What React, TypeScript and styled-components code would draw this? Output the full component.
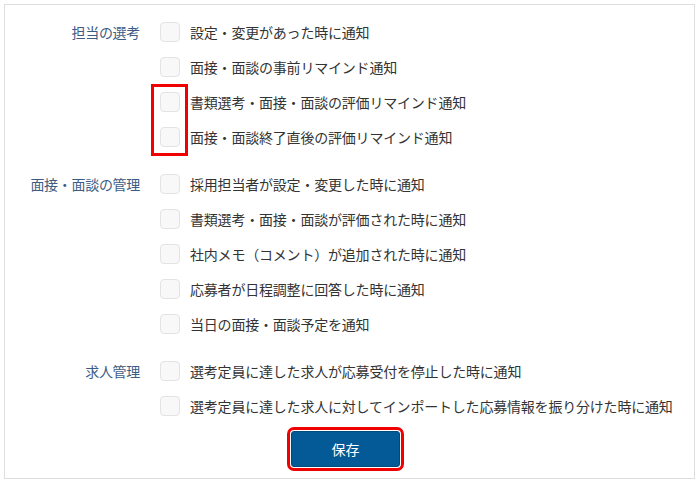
import React from 'react';
import styled, { createGlobalStyle } from 'styled-components';

const GlobalStyle = createGlobalStyle`
  html, body {
    margin: 0;
    padding: 0;
    background: #fff;
  }
  body {
    font-family: "Noto Sans CJK JP", "Noto Sans", sans-serif;
    color: #333;
  }
`;

const Page = styled.div`
  padding: 4px 5px 6px 4px;
`;

const Card = styled.form`
  border: 1px solid #dedede;
  background: #fff;
  padding: 17px 0 11px 0;
  display: flex;
  flex-direction: column;
  gap: 27px;
`;

const Section = styled.div`
  display: grid;
  grid-template-columns: 135px 1fr;
  column-gap: 20px;
  align-items: start;
`;

const SectionLabel = styled.div`
  text-align: right;
  font-size: 14px;
  line-height: 20px;
  letter-spacing: -0.3px;
  color: #3d5c84;
`;

const Items = styled.div`
  display: flex;
  flex-direction: column;
  gap: 15px;
`;

const Marked = styled.div`
  position: relative;
  display: flex;
  flex-direction: column;
  gap: 15px;

  &::before {
    content: '';
    position: absolute;
    left: -9px;
    top: -8px;
    width: 37px;
    height: 72px;
    border: 3px solid #f00000;
    box-sizing: border-box;
    pointer-events: none;
  }
`;

const Row = styled.label`
  display: flex;
  align-items: center;
  gap: 10px;
  font-size: 14px;
  line-height: 20px;
  letter-spacing: -0.2px;
  color: #333;
  white-space: nowrap;
`;

const Box = styled.span`
  flex: none;
  width: 20px;
  height: 20px;
  box-sizing: border-box;
  border: 1px solid #e3e3e3;
  border-radius: 4px;
  background: #f8f8f8;
`;

const Actions = styled.div`
  display: flex;
  justify-content: center;
  margin-top: -12px;
  padding-right: 8px;
`;

const SaveButton = styled.button`
  width: 109px;
  height: 36px;
  border: 1px solid #034a7c;
  border-radius: 3px;
  background: #045a96;
  color: #fff;
  font-family: "Noto Sans CJK JP", "Noto Sans", sans-serif;
  font-size: 14px;
  cursor: pointer;
  outline: 3px solid #f00000;
  outline-offset: 1px;
`;

type Group = {
  label: string;
  items: string[];
  marked?: [number, number];
};

const groups: Group[] = [
  {
    label: '担当の選考',
    items: [
      '設定・変更があった時に通知',
      '面接・面談の事前リマインド通知',
      '書類選考・面接・面談の評価リマインド通知',
      '面接・面談終了直後の評価リマインド通知',
    ],
    marked: [2, 4],
  },
  {
    label: '面接・面談の管理',
    items: [
      '採用担当者が設定・変更した時に通知',
      '書類選考・面接・面談が評価された時に通知',
      '社内メモ（コメント）が追加された時に通知',
      '応募者が日程調整に回答した時に通知',
      '当日の面接・面談予定を通知',
    ],
  },
  {
    label: '求人管理',
    items: [
      '選考定員に達した求人が応募受付を停止した時に通知',
      '選考定員に達した求人に対してインポートした応募情報を振り分けた時に通知',
    ],
  },
];

const Item: React.FC<{ text: string }> = ({ text }) => (
  <Row>
    <Box />
    {text}
  </Row>
);

const App: React.FC = () => {
  return (
    <>
      <GlobalStyle />
      <Page>
        <Card onSubmit={(e) => e.preventDefault()}>
          {groups.map((group) => {
            const [from, to] = group.marked ?? [group.items.length, group.items.length];
            return (
              <Section key={group.label}>
                <SectionLabel>{group.label}</SectionLabel>
                <Items>
                  {group.items.slice(0, from).map((t) => (
                    <Item key={t} text={t} />
                  ))}
                  {group.marked && (
                    <Marked>
                      {group.items.slice(from, to).map((t) => (
                        <Item key={t} text={t} />
                      ))}
                    </Marked>
                  )}
                  {group.items.slice(to).map((t) => (
                    <Item key={t} text={t} />
                  ))}
                </Items>
              </Section>
            );
          })}
          <Actions>
            <SaveButton type="submit">保存</SaveButton>
          </Actions>
        </Card>
      </Page>
    </>
  );
};

export default App;
